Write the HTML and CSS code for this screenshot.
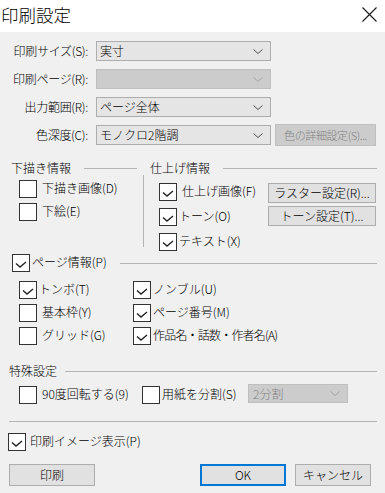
FILE: index.html
```html
<!DOCTYPE html>
<html lang="ja">
<head>
    <meta charset="UTF-8">
    <meta name="viewport" content="width=device-width, initial-scale=1.0">
    <title>印刷設定</title>
    <link rel="stylesheet" href="styles.css">
</head>
<body>

<div class="dialog">
    <div class="titlebar">
        <span class="title">印刷設定</span>
        <svg class="close" width="15" height="15" viewBox="0 0 15 15"><path d="M0.5 0.5 L14.5 14.5 M14.5 0.5 L0.5 14.5" stroke="#1a1a1a" stroke-width="1.1" fill="none"/></svg>
    </div>

    <div class="content">
        <div class="fields">
            <div class="field">
                <span class="field-label">印刷サイズ(S):</span>
                <div class="combo"><span>実寸</span><svg class="chev" width="10" height="5" viewBox="0 0 10 5"><polyline points="0.5,0.5 5,4.5 9.5,0.5" /></svg></div>
            </div>
            <div class="field">
                <span class="field-label">印刷ページ(R):</span>
                <div class="combo disabled"><span></span><svg class="chev" width="10" height="5" viewBox="0 0 10 5"><polyline points="0.5,0.5 5,4.5 9.5,0.5" /></svg></div>
            </div>
            <div class="field">
                <span class="field-label">出力範囲(R):</span>
                <div class="combo"><span>ページ全体</span><svg class="chev" width="10" height="5" viewBox="0 0 10 5"><polyline points="0.5,0.5 5,4.5 9.5,0.5" /></svg></div>
            </div>
            <div class="field field-last">
                <span class="field-label">色深度(C):</span>
                <div class="combo"><span>モノクロ2階調</span><svg class="chev" width="10" height="5" viewBox="0 0 10 5"><polyline points="0.5,0.5 5,4.5 9.5,0.5" /></svg></div>
                <div class="btn btn-detail disabled">色の詳細設定(S)...</div>
            </div>
        </div>

        <div class="split">
            <div class="group group-left">
                <div class="group-head"><span>下描き情報</span><span class="rule"></span></div>
                <div class="check-list">
                    <div class="check"><span class="box"></span><span class="check-text">下描き画像(D)</span></div>
                    <div class="check"><span class="box"></span><span class="check-text">下絵(E)</span></div>
                </div>
            </div>
            <div class="vsep"></div>
            <div class="group group-right">
                <div class="group-head"><span>仕上げ情報</span><span class="rule"></span></div>
                <div class="group-body">
                    <div class="check-list wide">
                        <div class="check"><span class="box"><svg width="16" height="16" viewBox="0 0 16 16"><polyline points="3,8.5 7,12 13,7" /></svg></span><span class="check-text">仕上げ画像(F)</span></div>
                        <div class="check"><span class="box"><svg width="16" height="16" viewBox="0 0 16 16"><polyline points="3,8.5 7,12 13,7" /></svg></span><span class="check-text tight">トーン(O)</span></div>
                        <div class="check"><span class="box"><svg width="16" height="16" viewBox="0 0 16 16"><polyline points="3,8.5 7,12 13,7" /></svg></span><span class="check-text tight">テキスト(X)</span></div>
                    </div>
                    <div class="side-buttons">
                        <div class="btn btn-side">ラスター設定(R)...</div>
                        <div class="btn btn-side">トーン設定(T)...</div>
                    </div>
                </div>
            </div>
        </div>

        <div class="page-head">
            <div class="check"><span class="box"><svg width="16" height="16" viewBox="0 0 16 16"><polyline points="3,8.5 7,12 13,7" /></svg></span><span class="check-text tight">ページ情報(P)</span></div>
            <span class="rule"></span>
        </div>
        <div class="page-grid">
            <div class="check"><span class="box"><svg width="16" height="16" viewBox="0 0 16 16"><polyline points="3,8.5 7,12 13,7" /></svg></span><span class="check-text tight">トンボ(T)</span></div>
            <div class="check"><span class="box"><svg width="16" height="16" viewBox="0 0 16 16"><polyline points="3,8.5 7,12 13,7" /></svg></span><span class="check-text tight">ノンブル(U)</span></div>
            <div class="check"><span class="box"></span><span class="check-text">基本枠(Y)</span></div>
            <div class="check"><span class="box"><svg width="16" height="16" viewBox="0 0 16 16"><polyline points="3,8.5 7,12 13,7" /></svg></span><span class="check-text tight">ページ番号(M)</span></div>
            <div class="check"><span class="box"></span><span class="check-text">グリッド(G)</span></div>
            <div class="check"><span class="box"><svg width="16" height="16" viewBox="0 0 16 16"><polyline points="3,8.5 7,12 13,7" /></svg></span><span class="check-text tight narrow">作品名・話数・作者名(A)</span></div>
        </div>

        <div class="group-head special-head"><span>特殊設定</span><span class="rule"></span></div>
        <div class="special-row">
            <div class="check rotate"><span class="box"></span><span class="check-text">90度回転する(9)</span></div>
            <div class="check split-paper"><span class="box"></span><span class="check-text tight">用紙を分割(S)</span></div>
            <div class="combo combo-small disabled"><span>2分割</span><svg class="chev" width="10" height="5" viewBox="0 0 10 5"><polyline points="0.5,0.5 5,4.5 9.5,0.5" /></svg></div>
        </div>

        <div class="hsep"></div>

        <div class="check preview"><span class="box"><svg width="16" height="16" viewBox="0 0 16 16"><polyline points="3,8.5 7,12 13,7" /></svg></span><span class="check-text">印刷イメージ表示(P)</span></div>

        <div class="footer">
            <div class="btn btn-print">印刷</div>
            <div class="btn btn-ok">OK</div>
            <div class="btn btn-cancel">キャンセル</div>
        </div>
    </div>
</div>

</body>
</html>
```

FILE: styles.css
```css
* {
    box-sizing: border-box;
}

body {
    margin: 0;
    background-color: #f0f0f0;
    font-family: "Noto Sans CJK JP", "Noto Sans", sans-serif;
    font-size: 12px;
    font-weight: 300;
    color: #000;
}

.dialog {
    width: 385px;
    height: 493px;
    background-color: #f0f0f0;
    overflow: hidden;
}

/* title bar */
.titlebar {
    height: 32px;
    background-color: #fff;
    display: flex;
    justify-content: space-between;
    align-items: flex-start;
}

.title {
    font-size: 17.5px;
    line-height: 20px;
    margin: 5px 0 0 1px;
}

.close {
    margin: 7px 8px 0 0;
}

.content {
    padding: 9px 8px 0 8px;
}

/* top combos */
.fields {
    display: flex;
    flex-direction: column;
    gap: 8px;
}

.field {
    display: flex;
    align-items: center;
    height: 20px;
}

.field-last {
    height: 22px;
    margin-top: -1px;
}

.field-label {
    width: 80px;
    margin-right: 8px;
    text-align: right;
    line-height: 14px;
    white-space: nowrap;
    letter-spacing: -0.3px;
}

.combo {
    width: 175px;
    height: 20px;
    display: flex;
    align-items: center;
    padding-left: 3px;
    background-color: #e5e5e5;
    border: 1px solid #adadad;
    line-height: 14px;
    white-space: nowrap;
}

.combo .chev {
    margin-left: auto;
    margin-right: 7px;
    fill: none;
    stroke: #4d4d4d;
    stroke-width: 1;
}

.combo.disabled {
    background-color: #cccccc;
    border-color: #bfbfbf;
    color: #838383;
}

.combo.disabled .chev {
    stroke: #a6a6a6;
}

.btn {
    height: 22px;
    line-height: 20px;
    text-align: center;
    background-color: #e1e1e1;
    border: 1px solid #adadad;
    white-space: nowrap;
    overflow: hidden;
}

.btn.disabled {
    background-color: #cccccc;
    border-color: #bfbfbf;
    color: #838383;
}

.btn-detail {
    width: 101px;
    margin-left: 4px;
    font-size: 11px;
    letter-spacing: -0.4px;
}

/* group boxes */
.group-head {
    display: flex;
    align-items: center;
    height: 14px;
    line-height: 14px;
    white-space: nowrap;
}

.rule {
    flex: 1;
    height: 1px;
    margin-left: 13px;
    background-color: #b4b4b4;
}

.split {
    display: flex;
    align-items: flex-start;
    margin-top: 15px;
}

.group-left {
    width: 126px;
    margin-left: 3px;
}

.vsep {
    width: 1px;
    height: 72px;
    margin: 14px 0 0 6px;
    background-color: #b4b4b4;
}

.group-right {
    flex: 1;
    margin-left: 6px;
}

.group-body {
    display: flex;
    margin-top: 8px;
}

.check-list {
    display: flex;
    flex-direction: column;
    gap: 5px;
    margin: 5px 0 0 8px;
}

.check-list.wide {
    gap: 7px;
    margin: 0 0 0 9px;
}

.side-buttons {
    display: flex;
    flex-direction: column;
    gap: 3px;
    margin-left: auto;
    margin-right: 1px;
}

.btn-side {
    width: 108px;
    height: 20px;
    line-height: 18px;
}

/* checkboxes */
.check {
    display: flex;
    align-items: flex-start;
    height: 18px;
}

.box {
    flex: none;
    width: 18px;
    height: 18px;
    background-color: #fff;
    border: 1px solid #333;
}

.box svg {
    display: block;
    fill: none;
    stroke: #222;
    stroke-width: 1.4;
}

.check-text {
    margin: 1px 0 0 5px;
    line-height: 14px;
    white-space: nowrap;
}

.check-text.tight {
    margin-left: 2px;
}

.check-text.narrow {
    letter-spacing: -0.8px;
}

/* page info */
.page-head {
    display: flex;
    align-items: center;
    margin: 3px 0 0 4px;
}

.page-head .rule {
    margin-left: 13px;
}

.page-grid {
    display: grid;
    grid-template-columns: 114px auto;
    row-gap: 5px;
    margin: 9px 0 0 11px;
}

/* special settings */
.special-head {
    margin: 19px 0 0 1px;
}

.special-head .rule {
    margin-left: 8px;
}

.special-row {
    display: flex;
    align-items: flex-start;
    margin-top: 6px;
}

.special-row .check {
    margin-top: 2px;
}

.rotate {
    width: 123px;
    margin-left: 11px;
}

.split-paper {
    width: 106px;
}

.combo-small {
    width: 100px;
    height: 19px;
    padding-left: 4px;
}

.hsep {
    height: 1px;
    margin: 17px 0 0 1px;
    background-color: #b4b4b4;
}

.preview {
    margin-top: 11px;
}

.preview .check-text {
    margin-left: 4px;
}

/* bottom buttons */
.footer {
    display: flex;
    margin-top: 13px;
}

.btn-print {
    width: 86px;
    margin-left: 1px;
}

.btn-ok {
    width: 86px;
    margin-left: 105px;
    border: 2px solid #0078d7;
    line-height: 18px;
}

.btn-cancel {
    width: 76px;
    margin-left: 9px;
}
```
